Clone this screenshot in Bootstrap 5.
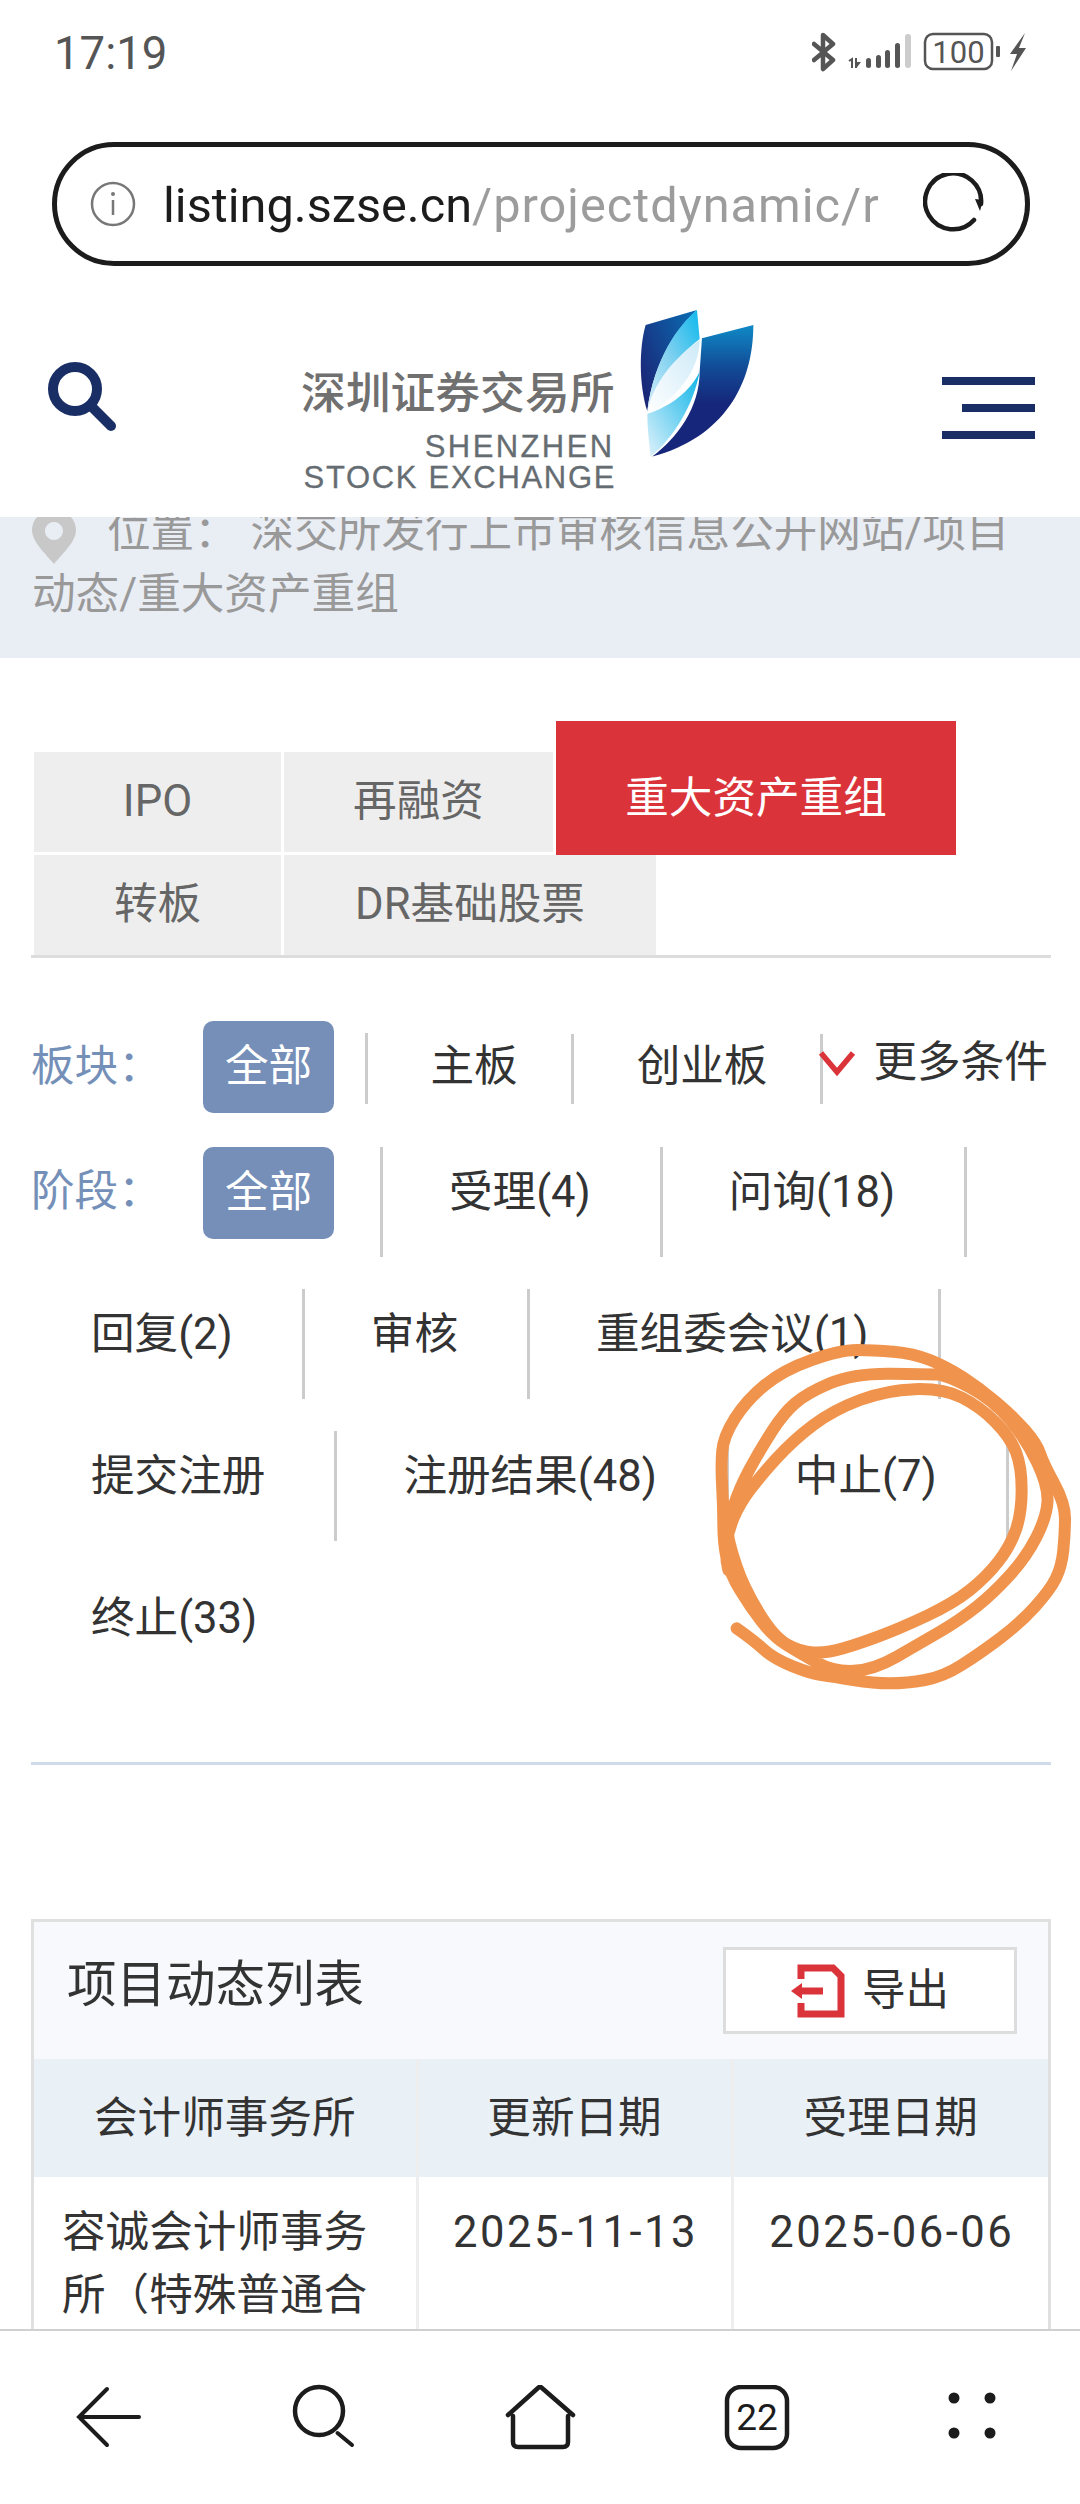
<!DOCTYPE html>
<html lang="zh-CN">

<head>
    <meta charset="UTF-8">
    <title>项目动态</title>
    <link href="https://cdn.jsdelivr.net/npm/bootstrap@5.3.0/dist/css/bootstrap.min.css" rel="stylesheet">
    <style>
        html, body {
            width: 1080px;
            height: 2504px;
            overflow: hidden;
        }

        body {
            position: relative;
            background: #fff;
            color: #333;
            font-family: Roboto, "Noto Sans CJK SC", sans-serif;
            font-size: 43.6px;
            line-height: 1.45;
        }

        /* phone chrome */
        .status-bar {
            height: 142px;
            padding: 0 53px 0 54px;
            flex-shrink: 0;
        }

        .status-time {
            font-family: Roboto, sans-serif;
            font-size: 45.5px;
            line-height: 1;
            color: #555;
            margin-top: 31px;
        }

        .status-icons {
            margin-top: 32px;
        }

        .url-wrap {
            height: 124px;
            padding: 0 50px 0 52px;
            flex-shrink: 0;
        }

        .url-pill {
            height: 124px;
            border: 5px solid #1c1c1c;
            border-radius: 62px;
            padding: 0 40px 0 33px;
        }

        .url-text {
            width: 725px;
            margin: 5px 0 0 27px;
            font-family: Roboto, sans-serif;
            font-size: 48.7px;
            line-height: 1.4;
            white-space: nowrap;
            color: #1c1c1c;
        }

        .url-text span {
            color: #9c9c9c;
            letter-spacing: 1px;
        }

        /* site header */
        .site-head {
            height: 251px;
            padding: 0 45px 0 47px;
            flex-shrink: 0;
        }

        .head-search {
            margin-top: 96px;
        }

        .head-logo {
            margin-top: 42px;
        }

        .logo-words {
            width: 311px;
            margin-top: 67px;
            text-align: right;
            color: #666d72;
        }

        .logo-cn {
            font-size: 44.8px;
            font-weight: 500;
            line-height: 38px;
            margin-left: -3px;
            color: #707070;
            white-space: nowrap;
        }

        .logo-en {
            font-family: "Liberation Sans", sans-serif;
            font-size: 31px;
            line-height: 31px;
            letter-spacing: 2.4px;
            white-space: nowrap;
            -webkit-text-stroke: .3px #666d72;
        }

        .logo-en.logo-long {
            letter-spacing: 1.7px;
        }

        .logo-cn + .logo-en {
            margin-top: 18px;
        }

        .head-menu {
            margin-top: 111px;
            width: 93px;
        }

        .head-menu i {
            display: block;
            height: 8px;
            margin-bottom: 19px;
            background: #1a2e66;
        }

        .head-menu i:nth-child(2) {
            margin-left: 20px;
        }

        /* content */
        .page-body {
            flex: 1 1 auto;
            min-height: 0;
            overflow: hidden;
        }

        .crumbs {
            height: 141px;
            overflow: hidden;
            background: #e9edf4;
            color: #999;
        }

        .crumbs-text {
            margin-top: -15px;
            padding: 0 60px 0 32px;
            line-height: 62px;
        }

        .crumbs-pin {
            display: inline-block;
            width: 77px;
            height: 48px;
            vertical-align: top;
            margin-top: 12px;
            margin-left: -2px;
        }

        .crumbs-pin svg {
            display: block;
        }

        .crumbs-gap {
            margin-left: 2px;
        }

        .tab-bar {
            margin: 63px 29px 0 31px;
            padding-left: 3px;
            border-bottom: 3px solid #ddd;
            align-items: flex-end;
        }

        .tab-bar .nav-link {
            height: 100px;
            padding: 0;
            margin: 0 3px 3px 0;
            background: #eee;
            color: #666;
            font-size: 43.6px;
        }

        .tab-bar li:last-child .nav-link,
        .tab-bar li:nth-child(4) .nav-link {
            margin-bottom: 0;
        }

        .tab-bar .nav-link.active {
            height: 134px;
            margin: 0;
            padding-top: 22px;
            background: #db333a;
            color: #fff;
        }

        .tab-w1 { width: 247px; }
        .tab-w2 { width: 269px; }
        .tab-w3 { width: 400px; }
        .tab-w4 { width: 372px; }

        .filter-wrap {
            margin: 63px 29px 0 31px;
        }

        .filter-label {
            color: #7590b8;
            width: 172px;
            flex-shrink: 0;
        }

        .filter-on {
            display: inline-block;
            width: 131px;
            height: 92px;
            line-height: 92px;
            text-align: center;
            border-radius: 10px;
            background: #758fb9;
            color: #fff;
        }

        .plate-row {
            height: 92px;
            margin-bottom: 34px;
        }

        .plate-item {
            height: 70px;
            margin-top: 13px;
            line-height: 66px;
            border-right: 3px solid #ccc;
            padding: 0 53px 0 63px;
            white-space: nowrap;
        }

        .plate-first {
            width: 164.5px;
            height: 83px;
            border-right: 3px solid #ccc;
            background: #fff;
            border-image: linear-gradient(to bottom, #fff 13px, #ccc 13px) 1;
        }

        .plate-first .filter-on {
            vertical-align: top;
        }

        .more-btn {
            margin: 10px 0 0 -5px;
            gap: 17px;
            white-space: nowrap;
        }

        .stage-row {
            column-gap: 6px;
            row-gap: 32px;
        }

        .stage-row .filter-label {
            width: 166px;
            height: 110px;
            line-height: 90px;
        }

        .stage-item {
            height: 110px;
            padding: 0 69px 0 60px;
            line-height: 92px;
            border-right: 3px solid #ccc;
            white-space: nowrap;
        }

        .stage-item.stage-all {
            padding: 0 46px 0 0;
            line-height: 1;
        }

        .stage-item.stage-last {
            border-right: 0;
        }

        .filter-rule {
            height: 3px;
            margin: 79px 29px 0 31px;
            background: #cfdbea;
        }

        /* list panel */
        .list-panel {
            margin: 154px 29px 0 31px;
            border: 3px solid #e0e0e0;
            border-bottom: 0;
        }

        .list-head {
            height: 137px;
            padding: 25px 31px 0 33px;
            background: #f8f9fc;
        }

        .list-title {
            font-size: 49.5px;
            line-height: 76px;
            color: #333;
        }

        .export-btn {
            width: 294px;
            height: 87px;
            border: 3px solid #ddd;
            background: #fff;
            gap: 17px;
            border-radius: 0;
            padding: 0;
            color: #333;
            font-size: 43.6px;
        }

        .list-table {
            width: 100%;
            table-layout: fixed;
        }

        .col-firm { width: 383px; }
        .col-date { width: 315px; }

        .list-table th,
        .list-table td {
            border-right: 3px solid #eee;
            font-weight: 400;
            vertical-align: top;
        }

        .list-table th:last-child,
        .list-table td:last-child {
            border-right: 0;
        }

        .list-table th {
            height: 118px;
            padding-top: 2px;
            background: #e9f0f6;
            text-align: center;
            vertical-align: middle;
        }

        .list-table td {
            padding: 24px 20px 0 28px;
            line-height: 63px;
        }

        .list-table td.date-cell {
            padding: 24px 0 0 2px;
            text-align: center;
            letter-spacing: 2.5px;
        }

        /* browser bottom bar */
        .bottom-bar {
            height: 175px;
            flex-shrink: 0;
            background: #fff;
            border-top: 2px solid #d0d0d0;
            padding: 54px 0 0 0;
        }

        .bar-slot {
            position: relative;
            height: 70px;
        }

        .bar-slot svg {
            display: block;
            position: absolute;
            top: 0;
        }

        .bar-back { left: 75px; }
        .bar-find { left: 290px; top: -4px !important; }
        .bar-home { left: 505px; }
        .bar-tabs { left: 723px; }
        .bar-more { left: 945px; top: 4px !important; }

        .tab-count {
            font-family: Roboto, sans-serif;
            font-size: 37px;
            fill: #1c1c1c;
        }

        .scribble {
            position: absolute;
            left: 660px;
            top: 1300px;
            pointer-events: none;
        }
    </style>

</head>

<body class="d-flex flex-column">

    <!-- 状态栏 -->
    <div class="status-bar d-flex justify-content-between">
        <div class="status-time">17:19</div>
        <div class="status-icons">
            <svg class="d-block" width="215" height="40" viewBox="812 32 215 40">
                <path d="M814 44 L833 60 L823 69 V35 L833 44 L814 60" fill="none" stroke="#555" stroke-width="4.5" stroke-linejoin="round" stroke-linecap="round"/>
                <path d="M849 61 l3 -2 v9 M856 58 v10 M855 63 h4 l-3 4" fill="none" stroke="#555" stroke-width="2"/>
                <rect x="866" y="58" width="5" height="10" rx="2.5" fill="#555"/>
                <rect x="876" y="55" width="5" height="13" rx="2.5" fill="#555"/>
                <rect x="885" y="50" width="5" height="18" rx="2.5" fill="#555"/>
                <rect x="895" y="43" width="5" height="25" rx="2.5" fill="#555"/>
                <rect x="905" y="34" width="6" height="34" rx="3" fill="#ccc"/>
                <rect x="925" y="34" width="67" height="35" rx="8" fill="none" stroke="#555" stroke-width="2.5"/>
                <text x="958.5" y="63" text-anchor="middle" font-family="Roboto, sans-serif" font-size="31" fill="#555">100</text>
                <rect x="996" y="46" width="4" height="11" rx="1" fill="#555"/>
                <path d="M1025 33 L1010 54 L1017 54 L1011 71 L1026 48 L1019 48 Z" fill="#555"/>
            </svg>
        </div>
    </div>

    <!-- 地址栏 -->
    <div class="url-wrap">
        <div class="url-pill d-flex align-items-center">
            <svg width="46" height="46" viewBox="0 0 46 46" class="flex-shrink-0">
                <circle cx="23" cy="23" r="21" fill="none" stroke="#777" stroke-width="2.5"/>
                <circle cx="23" cy="13" r="2" fill="#777"/>
                <path d="M23 19 V34" stroke="#777" stroke-width="2.5"/>
            </svg>
            <div class="url-text">listing.szse.cn<span>/projectdynamic/r</span></div>
            <svg width="62" height="62" viewBox="0 0 62 62" class="ms-auto flex-shrink-0">
                <path d="M51 47 A28 28 0 1 1 58 31" fill="none" stroke="#1c1c1c" stroke-width="4.5" stroke-linecap="round"/>
                <path d="M52 26 L60 27 L57 38 Z" fill="#1c1c1c"/>
            </svg>
        </div>
    </div>

    <!-- 网站头部 -->
    <div class="site-head d-flex justify-content-between align-items-start">
        <svg class="head-search" width="69" height="69" viewBox="0 0 69 69">
            <circle cx="28" cy="27" r="22" fill="none" stroke="#1a2e66" stroke-width="10"/>
            <path d="M44 44 L64 64" stroke="#1a2e66" stroke-width="10" stroke-linecap="round"/>
        </svg>
        <div class="head-logo d-flex">
            <div class="logo-words">
                <div class="logo-cn">深圳证券交易所</div>
                <div class="logo-en">SHENZHEN</div>
                <div class="logo-en logo-long">STOCK EXCHANGE</div>
            </div>
            <svg class="ms-4" width="116" height="150" viewBox="1075 50 350 450">
                <defs>
                    <linearGradient id="gr1" x1="0" y1="0" x2="0" y2="1">
                        <stop offset="0" stop-color="#0f8ac6"/>
                        <stop offset=".33" stop-color="#124a96"/>
                        <stop offset=".6" stop-color="#16267a"/>
                        <stop offset="1" stop-color="#16267a"/>
                    </linearGradient>
                    <linearGradient id="gr2" x1="1" y1="0" x2="0" y2=".7">
                        <stop offset="0" stop-color="#0a6fb5"/>
                        <stop offset="1" stop-color="#1a2878"/>
                    </linearGradient>
                    <linearGradient id="gr3" x1="1" y1="0" x2="0" y2="1">
                        <stop offset="0" stop-color="#0db8ec"/>
                        <stop offset=".5" stop-color="#7ed0f0"/>
                        <stop offset="1" stop-color="#d8eff9"/>
                    </linearGradient>
                    <linearGradient id="gr4" x1="1" y1="0" x2="0" y2="1">
                        <stop offset="0" stop-color="#cdeaf8"/>
                        <stop offset="1" stop-color="#ffffff"/>
                    </linearGradient>
                    <linearGradient id="gr5" x1="1" y1="0" x2="0" y2="1">
                        <stop offset="0" stop-color="#0db4e8"/>
                        <stop offset="1" stop-color="#e0f2fb"/>
                    </linearGradient>
                </defs>
                <path d="M1265 140 L1420 100 C1420 280 1330 440 1115 497 C1190 440 1258 350 1258 240 Z" fill="url(#gr1)"/>
                <path d="M1095 100 L1250 55 C1200 100 1120 200 1100 360 C1075 280 1075 170 1095 100 Z" fill="url(#gr2)"/>
                <path d="M1250 55 L1258 142 C1210 180 1130 260 1100 362 C1120 200 1195 100 1250 55 Z" fill="url(#gr3)"/>
                <path d="M1258 145 C1258 240 1180 330 1100 368 C1110 280 1190 190 1258 145 Z" fill="url(#gr4)"/>
                <path d="M1258 240 C1240 340 1180 440 1110 497 C1105 450 1100 410 1100 368 C1170 345 1230 300 1258 240 Z" fill="url(#gr5)"/>
            </svg>
        </div>
        <div class="head-menu"><i></i><i></i><i></i></div>
    </div>

    <div class="page-body">
        <!-- 面包屑 -->
        <div class="crumbs">
            <div class="crumbs-text">
                <span class="crumbs-pin">
                    <svg width="48" height="52" viewBox="0 0 48 52">
                        <path d="M24 -4 C10 -4 2 6 2 16 C2 28 16 40 24 50 C32 40 46 28 46 16 C46 6 38 -4 24 -4 Z M24 8 A9 9 0 1 1 23.9 8 Z" fill="#c8c8c8" fill-rule="evenodd"/>
                    </svg>
                </span>位置&#xFF1A; <span class="crumbs-gap">深交所发行上市审核信息公开网站/项目动态/重大资产重组</span>
            </div>
        </div>

        <!-- 业务类型 -->
        <ul class="nav tab-bar">
            <li class="nav-item"><a class="nav-link d-flex align-items-center justify-content-center tab-w1" href="#">IPO</a></li>
            <li class="nav-item"><a class="nav-link d-flex align-items-center justify-content-center tab-w2" href="#">再融资</a></li>
            <li class="nav-item"><a class="nav-link active d-flex align-items-center justify-content-center tab-w3" href="#">重大资产重组</a></li>
            <li class="nav-item"><a class="nav-link d-flex align-items-center justify-content-center tab-w1" href="#">转板</a></li>
            <li class="nav-item"><a class="nav-link d-flex align-items-center justify-content-center tab-w4" href="#">DR基础股票</a></li>
        </ul>

        <!-- 筛选 -->
        <div class="filter-wrap">
            <div class="plate-row d-flex align-items-start">
                <div class="filter-label align-self-center">板块&#xFF1A;</div>
                <div class="plate-first"><span class="filter-on">全部</span></div>
                <div class="plate-item">主板</div>
                <div class="plate-item">创业板</div>
                <div class="more-btn d-flex align-items-center">
                    <svg width="38" height="26" viewBox="0 0 38 26">
                        <path d="M3 3 L19 22 L35 3" fill="none" stroke="#db333a" stroke-width="5.5"/>
                    </svg>
                    <span>更多条件</span>
                </div>
            </div>
            <div class="stage-row d-flex flex-wrap">
                <div class="filter-label">阶段&#xFF1A;</div>
                <div class="stage-item stage-all"><span class="filter-on">全部</span></div>
                <div class="stage-item">受理(4)</div>
                <div class="stage-item">问询(18)</div>
                <div class="stage-item">回复(2)</div>
                <div class="stage-item">审核</div>
                <div class="stage-item">重组委会议(1)</div>
                <div class="stage-item">提交注册</div>
                <div class="stage-item">注册结果(48)</div>
                <div class="stage-item">中止(7)</div>
                <div class="stage-item stage-last">终止(33)</div>
            </div>
        </div>
        <div class="filter-rule"></div>

        <!-- 项目动态列表 -->
        <div class="list-panel">
            <div class="list-head d-flex justify-content-between align-items-start">
                <div class="list-title">项目动态列表</div>
                <button class="btn export-btn d-flex align-items-center justify-content-center">
                    <svg width="54" height="54" viewBox="0 0 54 54">
                        <path d="M10 15 V4 H42 L50 12 V50 H10 V39" fill="none" stroke="#db333a" stroke-width="7"/>
                        <path d="M8 27 H32" stroke="#db333a" stroke-width="7"/>
                        <path d="M0 27 L11 19 V35 Z" fill="#db333a"/>
                    </svg>
                    <span>导出</span>
                </button>
            </div>
            <table class="list-table">
                <colgroup>
                    <col class="col-firm">
                    <col class="col-date">
                    <col>
                </colgroup>
                <thead>
                    <tr><th>会计师事务所</th><th>更新日期</th><th>受理日期</th></tr>
                </thead>
                <tbody>
                    <tr>
                        <td>容诚会计师事务所&#xFF08;特殊普通合伙&#xFF09;</td>
                        <td class="date-cell">2025-11-13</td>
                        <td class="date-cell">2025-06-06</td>
                    </tr>
                </tbody>
            </table>
        </div>
    </div>

    <!-- 浏览器底栏 -->
    <div class="bottom-bar">
        <div class="bar-slot">
            <svg class="bar-back" width="68" height="64" viewBox="0 0 68 64">
                <path d="M32 4 L4 32 L32 60 M4 32 H64" fill="none" stroke="#1c1c1c" stroke-width="4" stroke-linecap="round"/>
            </svg>
            <svg class="bar-find" width="66" height="70" viewBox="0 0 66 70">
                <circle cx="29" cy="30" r="24" fill="none" stroke="#1c1c1c" stroke-width="4.5"/>
                <path d="M47.5 52 L62 64" stroke="#1c1c1c" stroke-width="4" stroke-linecap="round"/>
            </svg>
            <svg class="bar-home" width="72" height="66" viewBox="0 0 72 66">
                <path d="M3 30 L33 3 Q35 1 37 3 L68 30 M8 31 V57 Q8 62 13 62 H58 Q63 62 63 57 V31" fill="none" stroke="#1c1c1c" stroke-width="4.5" stroke-linecap="round"/>
            </svg>
            <svg class="bar-tabs" width="68" height="66" viewBox="0 0 68 66">
                <rect x="4" y="2" width="60" height="61" rx="14" fill="none" stroke="#1c1c1c" stroke-width="4.5"/>
                <text class="tab-count" x="34" y="45" text-anchor="middle">22</text>
            </svg>
            <svg class="bar-more" width="54" height="54" viewBox="0 0 54 54">
                <circle cx="9" cy="9" r="5.5" fill="#1c1c1c"/>
                <circle cx="45" cy="9" r="5.5" fill="#1c1c1c"/>
                <circle cx="9" cy="44" r="5.5" fill="#1c1c1c"/>
                <circle cx="45" cy="44" r="5.5" fill="#1c1c1c"/>
            </svg>
        </div>
    </div>

    <!-- 手写圈注 -->
    <svg class="scribble" width="420" height="420" viewBox="0 0 1260 1260">
        <path id="scribble-line" fill="none" stroke="#f0944d" stroke-width="36" stroke-linecap="round" stroke-linejoin="round"/>
    </svg>

    <script>
        // 圈注轨迹,取中点连成平滑曲线
        const pts = [
            [230, 985], [280, 1020], [340, 1075], [450, 1120], [520, 1130], [640, 1150], [740, 1150], [850, 1130],
            [960, 1060], [1080, 970], [1170, 870], [1205, 800], [1215, 700], [1215, 610], [1150, 490], [1130, 430],
            [1060, 350], [960, 265], [860, 200], [760, 160], [640, 150], [540, 150], [370, 210], [260, 300],
            [190, 410], [183, 500], [190, 620], [190, 730], [210, 820], [270, 920], [340, 1010], [420, 1060],
            [520, 1115], [640, 1110], [780, 1030], [900, 960], [1000, 880], [1100, 770], [1160, 650], [1165, 560],
            [1100, 420], [1000, 300], [860, 225], [800, 222], [580, 220], [440, 280], [370, 340], [300, 450],
            [240, 560], [200, 680], [210, 740], [250, 860], [340, 1010], [420, 1055], [500, 1060], [600, 1030],
            [720, 985], [880, 910], [980, 830], [1050, 740], [1085, 640], [1085, 500], [1050, 410], [960, 320],
            [850, 265], [680, 270], [520, 330], [400, 420], [300, 530], [240, 610], [205, 690], [195, 770], [215, 850]
        ];
        let d = `M${pts[0][0]} ${pts[0][1]}`;
        for (let i = 1; i < pts.length - 1; i++) {
            const mx = (pts[i][0] + pts[i + 1][0]) / 2;
            const my = (pts[i][1] + pts[i + 1][1]) / 2;
            d += ` Q${pts[i][0]} ${pts[i][1]} ${mx} ${my}`;
        }
        document.getElementById("scribble-line").setAttribute("d", d);
    </script>

    <script src="https://cdn.jsdelivr.net/npm/bootstrap@5.3.0/dist/js/bootstrap.bundle.min.js"></script>
</body>

</html>
